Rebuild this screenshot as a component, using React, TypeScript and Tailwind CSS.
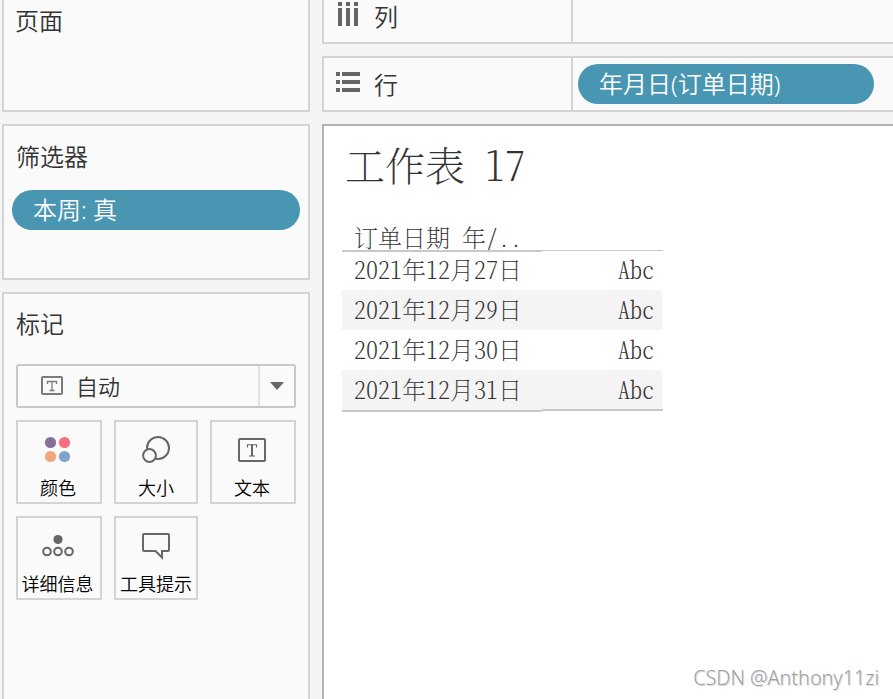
import type { ReactNode } from "react";

const uiFont = "font-['Noto_Sans','Noto_Sans_CJK_SC',sans-serif]";
const sheetFont = "font-['Noto_Serif_CJK_SC','Liberation_Serif','Noto_Sans_CJK_SC',serif]";

const dates = ["2021年12月27日", "2021年12月29日", "2021年12月30日", "2021年12月31日"];

function ColorIcon() {
  return (
    <svg width="40" height="32" viewBox="0 0 40 32">
      <circle cx="12.5" cy="10.5" r="5.6" fill="#86709a" />
      <circle cx="26.5" cy="10.5" r="5.6" fill="#f96d7f" />
      <circle cx="12.5" cy="24.5" r="5.6" fill="#f4a57d" />
      <circle cx="26.5" cy="24.5" r="5.6" fill="#81a3cb" />
    </svg>
  );
}

function SizeIcon() {
  return (
    <svg width="40" height="32" viewBox="0 0 40 32" fill="#fafafa" stroke="#666" strokeWidth="2">
      <circle cx="22" cy="16" r="11" />
      <circle cx="13.5" cy="23.5" r="6.4" />
    </svg>
  );
}

function TextIcon() {
  return (
    <svg width="40" height="32" viewBox="0 0 40 32" fill="none" stroke="#666">
      <rect x="7" y="7" width="26" height="22" rx="1" strokeWidth="2" />
      <path d="M15.5 15.5V12.7H24.5V15.5" strokeWidth="1.1" />
      <path d="M20 12.5V24" strokeWidth="2" />
      <path d="M17 24H23" strokeWidth="1.1" />
    </svg>
  );
}

function DetailIcon() {
  return (
    <svg width="40" height="32" viewBox="0 0 40 32" fill="none" stroke="#666" strokeWidth="2">
      <circle cx="20" cy="11.5" r="4.6" fill="#666" stroke="none" />
      <circle cx="9" cy="23.5" r="3.8" />
      <circle cx="20" cy="23.5" r="3.8" />
      <circle cx="31" cy="23.5" r="3.8" />
    </svg>
  );
}

function TooltipIcon() {
  return (
    <svg width="40" height="32" viewBox="0 0 40 32" fill="none" stroke="#666" strokeWidth="2">
      <path d="M8 6H32Q33 6 33 7V22Q33 23 32 23H26V29.5L19.5 23H8Q7 23 7 22V7Q7 6 8 6Z" />
    </svg>
  );
}

function MarkButton({ icon, label, className = "" }: { icon: ReactNode; label: string; className?: string }) {
  return (
    <button className={`flex h-[84px] flex-col items-center border-2 border-[#d4d4d4] pt-[10px] text-[18px] leading-[26px] text-black ${className}`}>
      {icon}
      <span className="mt-[11px] whitespace-nowrap">{label}</span>
    </button>
  );
}

function Shelf({ icon, label, children, className }: { icon: ReactNode; label: ReactNode; children?: ReactNode; className: string }) {
  return (
    <section className={`flex shrink-0 border-y-2 border-l-2 border-[#d4d4d4] bg-[#fafafa] ${className}`}>
      <div className="flex w-[249px] shrink-0 items-center border-r-2 border-[#d4d4d4] pl-3">
        {icon}
        {label}
      </div>
      <div className="flex flex-1 items-center pl-[5px]">{children}</div>
    </section>
  );
}

export default function App() {
  return (
    <main className={`relative flex h-[699px] w-[893px] gap-3 overflow-hidden bg-[#f4f4f4] pl-0.5 text-[24px] font-[350] leading-8 text-[#333] ${uiFont}`}>
      <aside className="flex w-[308px] shrink-0 flex-col gap-3">
        <section className="h-28 shrink-0 border-2 border-t-0 border-[#d4d4d4] bg-[#fafafa] pl-[11px] pt-[5px]">
          页面
        </section>
        <section className="h-[156px] shrink-0 border-2 border-[#d4d4d4] bg-[#fafafa] px-2 pt-[15px]">
          <h2 className="pl-1">筛选器</h2>
          <div className="mt-[17px] flex h-10 items-center rounded-full bg-[#4996b2] pl-[21px] text-white">
            本周: 真
          </div>
        </section>
        <section className="flex-1 border-x-2 border-t-2 border-[#d4d4d4] bg-[#fafafa] pl-3 pr-3 pt-[14px]">
          <h2>标记</h2>
          <div className="mt-[24px] flex h-11 items-center rounded-[3px] border-2 border-[#c8c8c8]">
            <svg className="ml-[22px]" width="24" height="20" viewBox="0 0 24 20" fill="none" stroke="#7b7b7b">
              <rect x="2" y="1" width="20" height="17" rx="1" strokeWidth="2" />
              <path d="M7.5 8V5.5H16.5V8M12 5.5V14.5M9.5 14.5H14.5" strokeWidth="1.3" />
            </svg>
            <span className="ml-[12px] flex-1 text-[22px]">自动</span>
            <div className="flex h-full w-9 items-center justify-center border-l-2 border-[#e2e2e2]">
              <svg width="14" height="8" viewBox="0 0 14 8"><path d="M0 0H14L7 8Z" fill="#666" /></svg>
            </div>
          </div>
          <div className="mt-3 grid grid-cols-[86px_84px_86px] gap-3">
            <MarkButton className="pr-0.5" icon={<ColorIcon />} label="颜色" />
            <MarkButton icon={<SizeIcon />} label="大小" />
            <MarkButton className="pr-0.5" icon={<TextIcon />} label="文本" />
            <MarkButton className="pr-[3px]" icon={<DetailIcon />} label="详细信息" />
            <MarkButton icon={<TooltipIcon />} label="工具提示" />
          </div>
        </section>
      </aside>

      <div className="flex min-w-0 flex-1 flex-col gap-3">
        <Shelf
          className="h-11 border-t-0"
          label={<span className="-mt-[8px] ml-[14px]">列</span>}
          icon={
            <svg className="-mt-[14px]" width="24" height="26" viewBox="0 0 24 26" fill="#666">
              <path d="M2 1h4v4H2zM10 1h4v4h-4zM18 1h4v4h-4zM2 7h4v18H2zM10 7h4v18h-4zM18 7h4v18h-4z" />
            </svg>
          }
        />
        <Shelf
          className="h-14"
          label={<span className="ml-[14px] mt-0.5">行</span>}
          icon={
            <svg className="-mt-[4px]" width="24" height="20" viewBox="0 0 24 20" fill="#666">
              <path d="M0 0h4v4H0zM6 0h18v4H6zM0 8h4v4H0zM6 8h18v4H6zM0 16h4v4H0zM6 16h18v4H6z" />
            </svg>
          }
        >
          <div className="flex h-10 w-[296px] items-center rounded-full bg-[#4996b2] pl-[21px] text-white">
            年月日(订单日期)
          </div>
        </Shelf>
        <section className={`flex-1 border-l-2 border-t-2 border-[#b3b3b3] bg-white pl-[18px] font-extralight [font-feature-settings:'hwid'] ${sheetFont}`}>
          <h1 className="mt-[10px] h-14 pl-[3px] text-[40px] leading-[56px]">工作表 17</h1>
          <div className="mt-[30px] w-[321px]">
            <div className="h-[28px] pl-3 leading-[29px]">订单日期 年/..</div>
            <div className="flex h-0.5">
              <div className="w-[200px] bg-[#c8c8c8]" />
              <div className="h-px flex-1 bg-[#c8c8c8]" />
            </div>
            <div className="-mt-0.5 w-80">
              {dates.map((date, i) => (
                <div key={date} className={`flex h-10 items-center justify-between pb-0.5 pl-3 pr-2 ${i % 2 ? "bg-[#f4f4f4]" : ""}`}>
                  <span>{date}</span>
                  <span>Abc</span>
                </div>
              ))}
            </div>
            <div className="-mt-px flex h-[3px]">
              <div className="mt-px w-[200px] bg-[#c8c8c8]" />
              <div className="h-0.5 flex-1 bg-[#c8c8c8]" />
            </div>
          </div>
        </section>
      </div>
      <div className="absolute bottom-[5px] right-[14px] text-[19.8px] text-[#a0a0a0] [text-shadow:1px_1px_0_#dcdcdc]">
        CSDN @Anthony11zi
      </div>
    </main>
  );
}
